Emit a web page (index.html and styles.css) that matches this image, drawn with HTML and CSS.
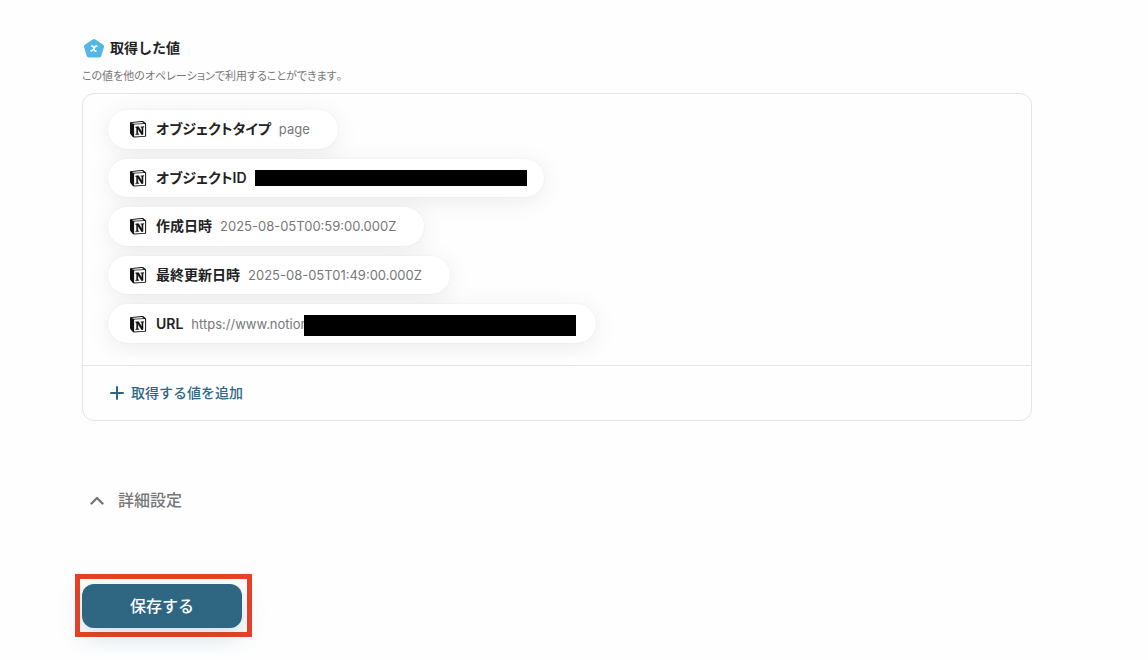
FILE: index.html
```html
<!DOCTYPE html>
<html lang="ja">
<head>
<meta charset="utf-8">
<meta name="viewport" content="width=device-width, initial-scale=1">
<title>取得した値</title>
<link rel="stylesheet" href="styles.css">
</head>
<body>
<svg class="sprite" aria-hidden="true">
  <symbol id="notion" viewBox="0 0 18 18">
    <path d="M1 2.2 12.6 1.1c1-.1 1.4 0 2.1.5l1.8 1.3c.5.4.6.6.6 1.2v11.3c0 .9-.4 1.3-1.3 1.4l-10.600.6c-.8 0-1.2-.1-1.600-.6L1.500 14.200C1.100 13.600 1 13.200 1 12.700z" fill="#111"/>
    <path d="M2.500 2.900 12.500 2.100c.6 0 .8 0 1.200.3l1.100.8-9.400.6c-.6 0-.8 0-1.200-.3z" fill="#fff"/>
    <path d="M5.100 5.100c0-.4.200-.6.600-.6l9.800-.5c.4 0 .6.200.6.600v10.600c0 .4-.2.700-.6.700l-9.800.5c-.4 0-.6-.1-.6-.5z" fill="#fff"/>
    <path d="M6.600 6.800 9.600 6.600l3.200 5.200V7.700l-1-.4v-.6l3.200-.2v.6l-.9.4v7l-1.400.4-3.800-5.900v4.600l1.100.4v.6l-3.400.2v-.6l.9-.4V7.900l-.9-.4z" fill="#111" stroke="#111" stroke-width=".3"/>
  </symbol>
</svg>
<main class="page">
  <section class="values">
    <h2 class="values-title">
      <svg class="badge" viewBox="0 0 20 20" aria-hidden="true">
        <path d="M10 3.500 17.500 8.500 15 17H5L2.500 8.500z" fill="#56b7e6" stroke="#56b7e6" stroke-width="5" stroke-linejoin="round"/>
        <path d="M7.600 8c.9-.3 1.400 0 1.700.9l1.100 3.300c.3.900.8 1.200 1.600.8M13 8.200c-.8-.4-1.400-.1-2 .6l-2.300 3.300c-.5.700-1 1-1.700.7" fill="none" stroke="#fff" stroke-width="1.500" stroke-linecap="round"/>
      </svg>
      取得した値
    </h2>
    <p class="values-note">この値を他のオペレーションで利用することができます。</p>
    <div class="panel">
      <ul class="pills">
        <li class="pill"><svg class="logo" aria-hidden="true"><use href="#notion"/></svg><span class="name">オブジェクトタイプ</span><span class="value">page</span></li>
        <li class="pill pill-id"><svg class="logo" aria-hidden="true"><use href="#notion"/></svg><span class="name">オブジェクトID</span><span class="mask"></span></li>
        <li class="pill"><svg class="logo" aria-hidden="true"><use href="#notion"/></svg><span class="name">作成日時</span><span class="value">2025-08-05T00:59:00.000Z</span></li>
        <li class="pill"><svg class="logo" aria-hidden="true"><use href="#notion"/></svg><span class="name">最終更新日時</span><span class="value">2025-08-05T01:49:00.000Z</span></li>
        <li class="pill pill-url"><svg class="logo" aria-hidden="true"><use href="#notion"/></svg><span class="name">URL</span><span class="value">https://www.notion</span><span class="mask"></span></li>
      </ul>
      <div class="panel-footer">
        <button type="button" class="add">
          <svg class="plus" viewBox="0 0 14 14" aria-hidden="true"><path d="M7 1v12M1 7h12" stroke="currentColor" stroke-width="2" stroke-linecap="round"/></svg>
          取得する値を追加
        </button>
      </div>
    </div>
  </section>
  <button type="button" class="advanced" aria-expanded="false">
    <svg class="chevron" viewBox="0 0 14 9" aria-hidden="true"><path d="M1.500 7.500 7 2l5.500 5.500" fill="none" stroke="currentColor" stroke-width="2.400" stroke-linecap="round" stroke-linejoin="round"/></svg>
    詳細設定
  </button>
  <div class="highlight">
    <button type="button" class="save">保存する</button>
  </div>
</main>
</body>
</html>
```
FILE: styles.css
```css
* {
  box-sizing: border-box;
}

body {
  margin: 0;
  background: #fefefe;
  color: #222;
  font-family: Inter, "Noto Sans CJK JP", sans-serif;
}

button {
  border: 0;
  padding: 0;
  background: none;
  font-family: inherit;
  cursor: pointer;
}

.sprite {
  display: none;
}

.page {
  display: flex;
  flex-direction: column;
  align-items: flex-start;
  padding: 36px 116px 20px 82px;
}

.values {
  width: 100%;
}

.values-title {
  display: flex;
  align-items: center;
  gap: 6px;
  margin: 0;
  padding-left: 2px;
  font-size: 14px;
  font-weight: 600;
  line-height: 24px;
}

.badge {
  width: 20px;
  height: 20px;
}

.values-note {
  margin: 6px 0 7px;
  color: #777;
  font-size: 11px;
  line-height: 20px;
  font-feature-settings: "palt";
  font-kerning: none;
}

.panel {
  border: 1px solid #e4e4e4;
  border-radius: 12px;
}

.pills {
  display: grid;
  grid-auto-rows: 1fr;
  justify-items: start;
  gap: 10px;
  min-height: 271px;
  margin: 0;
  padding: 16px 25px 22px;
  list-style: none;
}

.pill {
  display: flex;
  align-items: center;
  padding: 0 28px 0 21px;
  border-radius: 20px;
  background: #fff;
  box-shadow: 0 4px 24px rgba(0, 0, 0, 0.08), 0 0 2px rgba(0, 0, 0, 0.06);
}

.logo {
  width: 18px;
  height: 18px;
}

.name {
  margin: 0 8px 0 9px;
  font-size: 14px;
  font-weight: 600;
  line-height: 20px;
  font-feature-settings: "palt";
}

.value {
  color: #777;
  font-size: 13px;
  line-height: 20px;
}

.mask {
  width: 272px;
  height: 16px;
  background: #000;
}

.pill-id {
  padding-right: 17px;
}

.pill-url {
  padding-right: 20px;
}

.pill-url .mask {
  height: 21px;
  margin: 4px 0 0 -4px;
}

.panel-footer {
  padding: 15px 27px;
  border-top: 1px solid #e4e4e4;
}

.add {
  display: flex;
  align-items: center;
  gap: 7px;
  color: #2f6783;
  font-size: 14px;
  font-weight: 500;
  line-height: 24px;
}

.plus {
  width: 14px;
  height: 14px;
}

.advanced {
  display: flex;
  align-items: center;
  gap: 14px;
  margin: 67px 0 62px 8px;
  color: #777;
  font-size: 16px;
  font-weight: 500;
  line-height: 24px;
}

.chevron {
  width: 14px;
  height: 9px;
}

.highlight {
  margin-left: -7px;
  padding: 5px 5px 4px 2px;
  border: 5px solid #ec3f25;
}

.save {
  display: block;
  padding: 10px 48px;
  border-radius: 12px;
  background: #2f6783;
  box-shadow: 0 8px 24px rgba(47, 103, 131, 0.22);
  color: #fff;
  font-size: 16px;
  font-weight: 500;
  line-height: 24px;
}
```
